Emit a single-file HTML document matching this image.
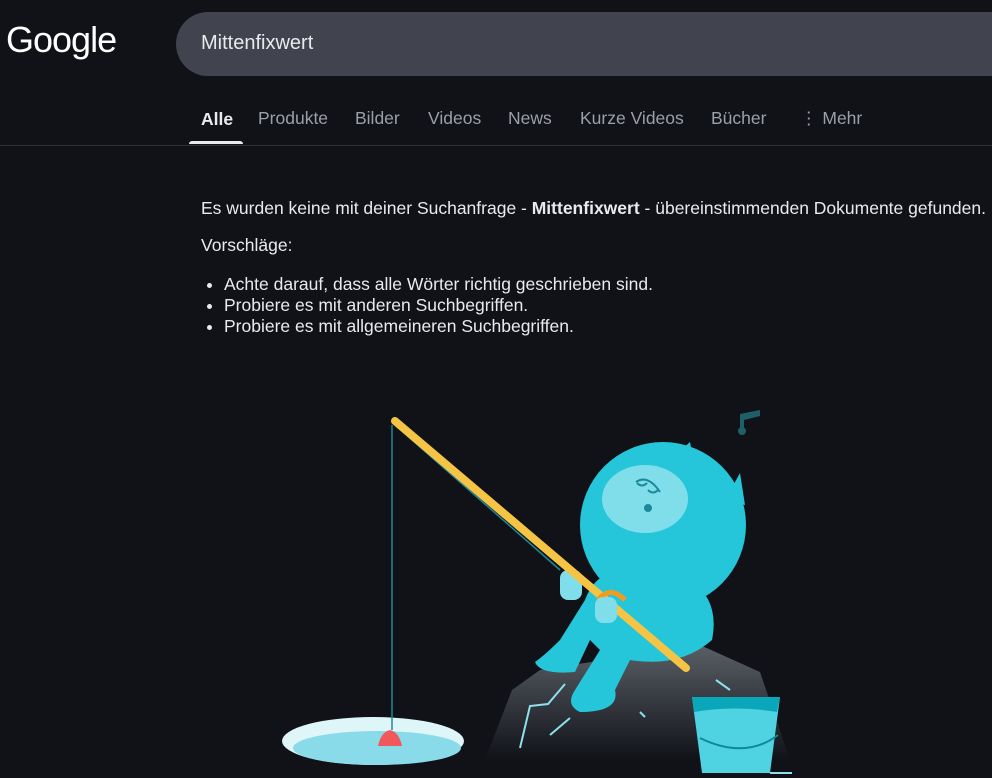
<!DOCTYPE html>
<html><head><meta charset="utf-8"><style>
html,body{margin:0;padding:0;background:#101218;width:992px;height:778px;overflow:hidden;font-family:"Liberation Sans",Arial,sans-serif;color:#e8eaed}
.logo{position:absolute;left:6px;top:19px;font-size:36px;color:#fff;letter-spacing:-1px}
.bar{position:absolute;left:176px;top:12px;width:900px;height:64px;border-radius:32px;background:#41434f}
.bar span{position:absolute;left:25px;top:20px;font-size:20px;color:#e8eaed}
.tab{position:absolute;top:108px;font-size:17.5px;color:#9aa0a6}
.tab.on{color:#e8eaed;font-weight:bold;top:109px}
.ul{position:absolute;left:189px;top:141px;width:54px;height:3px;background:#e8eaed;border-radius:3px 3px 0 0}
.hr{position:absolute;left:0;top:145px;width:992px;height:1px;background:#2c2e33}
.t{position:absolute;left:201px;font-size:17.5px;color:#e8eaed;white-space:nowrap}
ul{position:absolute;left:201px;top:274px;margin:0;padding:0 0 0 23px;font-size:17.5px;line-height:21px;white-space:nowrap}
</style></head><body>
<div class="logo">Google</div>
<div class="bar"><span>Mittenfixwert</span></div>
<div class="tab on" style="left:201px">Alle</div>
<div class="tab" style="left:258px">Produkte</div>
<div class="tab" style="left:355px">Bilder</div>
<div class="tab" style="left:428px">Videos</div>
<div class="tab" style="left:508px">News</div>
<div class="tab" style="left:580px">Kurze Videos</div>
<div class="tab" style="left:711px">Bücher</div>
<div class="tab" style="left:800px">⋮ Mehr</div>
<div class="ul"></div><div class="hr"></div>
<div class="t" style="top:198px">Es wurden keine mit deiner Suchanfrage - <b>Mittenfixwert</b> - übereinstimmenden Dokumente gefunden.</div>
<div class="t" style="top:235px">Vorschläge:</div>
<ul><li>Achte darauf, dass alle Wörter richtig geschrieben sind.</li><li>Probiere es mit anderen Suchbegriffen.</li><li>Probiere es mit allgemeineren Suchbegriffen.</li></ul>
<svg width="992" height="778" style="position:absolute;left:0;top:0">
<defs><linearGradient id="r" x1="0" y1="0" x2="0" y2="1"><stop offset="0" stop-color="#5a5f66"/><stop offset="1" stop-color="#101218"/></linearGradient></defs>
<polygon points="485,760 512,690 540,670 700,645 760,672 790,760" fill="url(#r)"/>
<path d="M520,748 L530,706 L548,704 L565,684 M550,735 L570,718 M640,712 L645,717 M716,680 L730,690" stroke="#8de0ee" stroke-width="2" fill="none"/>
<ellipse cx="373" cy="741" rx="91" ry="24" fill="#dff6f9"/>
<ellipse cx="377" cy="748" rx="84" ry="17" fill="#8adbe9"/>
<line x1="392" y1="425" x2="392" y2="730" stroke="#1a8a9a" stroke-width="1.5"/>
<line x1="395" y1="425" x2="560" y2="570" stroke="#1a8a9a" stroke-width="1.5"/>
<path d="M378,746 Q381,732 390,730 Q399,732 402,746 Z" fill="#f0585c"/>
<path d="M640,580 Q600,560 585,600 L560,640 Q545,655 535,662 Q540,675 575,672 L590,640 L600,650 L575,690 Q565,705 580,712 Q620,712 615,690 L630,660 Q680,668 712,640 Q720,600 690,580 Z" fill="#26c6da"/>
<circle cx="663" cy="525" r="83" fill="#26c6da"/>
<path d="M690,442 L695,470 L670,460 Z M630,450 L630,480 L615,470 Z M740,473 L745,505 L725,500 Z" fill="#26c6da"/>
<ellipse cx="645" cy="499" rx="43" ry="34" fill="#80deea"/>
<path d="M637,483 q5,5 10,0 M648,490 q5,5 10,0 M636,482 q12,-8 24,10" stroke="#1a8a9a" stroke-width="2" fill="none"/>
<circle cx="648" cy="508" r="4" fill="#1a8a9a"/>
<rect x="560" y="570" width="22" height="30" rx="8" fill="#80deea"/>
<line x1="395" y1="421" x2="686" y2="668" stroke="#f6c445" stroke-width="8" stroke-linecap="round"/>
<path d="M598,600 Q610,585 625,600" stroke="#f29c1f" stroke-width="5" fill="none"/>
<rect x="595" y="597" width="22" height="26" rx="8" fill="#80deea"/>
<path d="M740,430 l0,-16 l20,-4 l0,6 l-16,4 l0,10 Z" fill="#1f5f68"/>
<circle cx="742" cy="431" r="4" fill="#1f5f68"/>
<path d="M692,697 L780,697 L770,773 L702,773 Z" fill="#4fd3e3"/>
<path d="M692,697 L780,697 L777,712 Q735,705 694,712 Z" fill="#0aa7bb"/>
<path d="M700,738 Q745,760 778,735" stroke="#0a8a9a" stroke-width="2" fill="none"/>
<line x1="770" y1="773" x2="792" y2="773" stroke="#8de0ee" stroke-width="2"/>
</svg>
</body></html>
